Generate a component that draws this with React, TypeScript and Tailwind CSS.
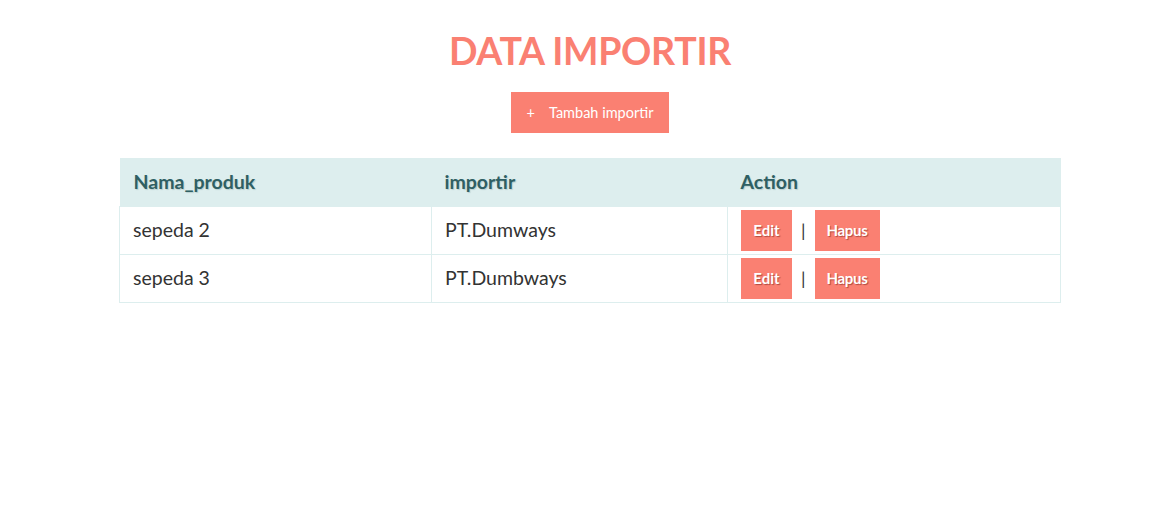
const rows = [
  { nama: 'sepeda 2', importir: 'PT.Dumways' },
  { nama: 'sepeda 3', importir: 'PT.Dumbways' },
];

export default function App() {
  return (
    <div className="min-h-screen bg-white pl-[19px] font-['Lato','Liberation_Sans',sans-serif] text-[#333]">
      <div className="flex flex-col items-center pt-[28px]">
        <h1 className="text-[37.5px] font-bold leading-[46px] tracking-[-0.3px] text-[#fa8072]">DATA IMPORTIR</h1>
        <button className="mt-[18px] flex h-[41px] w-[158px] items-center justify-center gap-[14px] bg-[#fa8072] text-[14.5px] text-white">
          <span>+</span>
          <span>Tambah importir</span>
        </button>
      </div>
      <table className="mx-auto mt-[25px] w-[942px] border-collapse text-[19.5px]">
        <thead>
          <tr className="h-[48px] bg-[#ddeeee] text-left text-[#2f5f63] [text-shadow:1px_1px_1px_#b9cfcf]">
            <th className="w-[312px] pl-[14px] font-bold">Nama_produk</th>
            <th className="w-[296px] pl-[13px] font-bold">importir</th>
            <th className="pl-[13px] font-bold">Action</th>
          </tr>
        </thead>
        <tbody>
          {rows.map((r) => (
            <tr key={r.nama} className="h-[48px] border border-[#ddeeee]">
              <td className="border border-[#ddeeee] pl-[13px]">{r.nama}</td>
              <td className="border border-[#ddeeee] pl-[13px]">{r.importir}</td>
              <td className="border border-[#ddeeee] pl-[13px]">
                <div className="flex items-center">
                  <button className="h-[41px] w-[51px] bg-[#fa8072] text-[15px] font-bold text-white [text-shadow:1px_1px_1px_#b04a40]">Edit</button>
                  <span className="mx-[9px] text-[18px] text-[#333]">|</span>
                  <button className="h-[41px] w-[65px] bg-[#fa8072] text-[15px] font-bold tracking-[-0.3px] text-white [text-shadow:1px_1px_1px_#b04a40]">Hapus</button>
                </div>
              </td>
            </tr>
          ))}
        </tbody>
      </table>
    </div>
  );
}
